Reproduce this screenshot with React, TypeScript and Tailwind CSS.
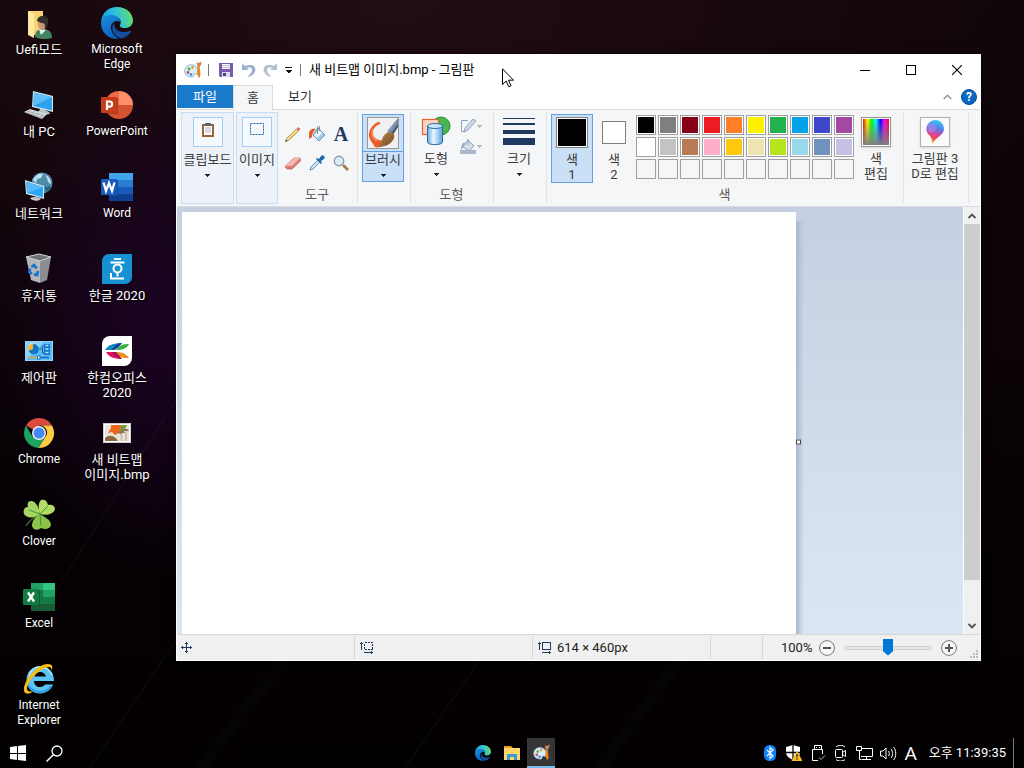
import React, { useState } from 'react'

const fontStack = "font-[Roboto,'Noto_Sans_CJK_KR',sans-serif]";

/* ---------- desktop icons ---------- */

function EdgeIcon({ className, id }: { className: string, id: string }) {
    return (
        <svg viewBox="0 0 32 32" className={className}>
            <defs>
                <linearGradient id={id + 'a'} x1="0" y1="0.5" x2="1" y2="0.3">
                    <stop offset="0" stopColor="#1b9de2" />
                    <stop offset="0.5" stopColor="#2cc3dc" />
                    <stop offset="1" stopColor="#6be05a" />
                </linearGradient>
                <linearGradient id={id + 'b'} x1="0" y1="0" x2="0.4" y2="1">
                    <stop offset="0" stopColor="#1a8fdc" />
                    <stop offset="1" stopColor="#0a63c0" />
                </linearGradient>
            </defs>
            <path d="M0 15C1 5 8 0 16 0c10 0 16 7 16 13.5 0 5-4 7.500-8 7.500-4 0-6-1.500-5-3 2-3 0-8-6-9C7 8 2 11 0 15z" fill={`url(#${id}a)`} />
            <path d="M0 16C1 10 6 7.500 11 8c5 .5 8 4 8.500 7C14 12 9 17 10 22c1 4 4 8 8 9.700C8 33 0 26 0 16z" fill={`url(#${id}b)`} />
            <path d="M13 16c-4 5-1 13 7 15.500C24 31 28 28 30 24.500c.4-1-.5-1-1-.7-7 3-15 .5-15.500-5.500z" fill="#14509e" />
        </svg>
    );
}

function PaintIcon({ className }: { className: string }) {
    return (
        <svg viewBox="0 0 18 18" className={className}>
            <path d="M9 4C4 3 1 6 .7 10c0 3 2 5.500 6 6 2 .2 3-.5 3-1.500 0-1.500.5-2 2-1.500 2 .5 3-1 2.500-3.500C14 7 12 4.500 9 4z" fill="#d8eef9" stroke="#6ea9cd" strokeWidth="0.8" />
            <circle cx="4" cy="11.500" r="1.400" fill="#e0443a" />
            <circle cx="5" cy="8" r="1.400" fill="#4bb14b" />
            <circle cx="8.500" cy="6.500" r="1.400" fill="#f0a02c" />
            <circle cx="7" cy="13.500" r="1.300" fill="#3b7fd4" />
            <path d="M12.500 1.500l2 .5L17.500.5 17 4l-1.500 2h-2z" fill="#c98a4b" />
            <path d="M13.500 6h2.200l.8 8-1 3-1-1-1.500-3z" fill="#e8841f" />
        </svg>
    );
}

function UserFolderIcon() {
    return (
        <svg viewBox="0 0 32 32" className="size-8">
            <path d="M5 4h15v24H5z" fill="#f7d374" />
            <path d="M5 4l6 3v24l-6-3z" fill="#ffe9a3" />
            <path d="M12 30c0-6 3-8 8-8s9 2 9 9c-5 1.500-13 1.500-17-1z" fill="#418260" />
            <path d="M16 22l2 6 5-5z" fill="#e9f1ec" />
            <ellipse cx="19" cy="17" rx="4" ry="6" fill="#c99873" />
            <path d="M14 15c0-5 3-6 6-6 5 0 6 4 5 7l-1 4-2 2c0-4 0-6-3-6s-4-3-5-1z" fill="#33302c" />
        </svg>
    );
}

function ComputerIcon() {
    return (
        <svg viewBox="0 0 32 32" className="size-8">
            <path d="M18 19l8 4 1 2-6 1-6-3z" fill="#b9c2ca" />
            <path d="M10 2l20 5v16L9 18z" fill="#dce6ee" />
            <path d="M11 3.500L29 8v13.500L10.200 17z" fill="#2da3ef" />
            <path d="M11 3.500L29 8 10.200 17z" fill="#5ebdfb" />
            <path d="M1 23l6-3 17 5-5 5z" fill="#d5d9dd" />
            <path d="M4 22l17 5M2.500 23.500L20 29M8 21l-4 3M12 22l-4 3.500M16 24l-4 3M20 25l-3 3.500" stroke="#9299a0" strokeWidth="0.6" />
        </svg>
    );
}

function NetworkIcon() {
    return (
        <svg viewBox="0 0 32 32" className="size-8">
            <circle cx="19" cy="12" r="10.500" fill="#4d8cab" />
            <path d="M10 9c3-6 7-7 10-6l-2 4-4 1-1 4zM22 4c4 1 6 5 6 9l-3-2-1-4z" fill="#bfe0ed" />
            <path d="M22 16l6-1c0 3-2 5-5 6z" fill="#2c657f" />
            <path d="M2 9l19 6v13L3 23z" fill="#dce6ee" />
            <path d="M3.200 10.500L20 16v10.500L4 22z" fill="#2ba6f4" />
            <path d="M3.200 10.500L20 16 4 22z" fill="#55b9fa" />
            <path d="M7 27c4-2 9-1 11 1-3 3-9 2-11-1z" fill="#c3cad0" />
        </svg>
    );
}

function TrashIcon() {
    return (
        <svg viewBox="0 0 32 32" className="size-8">
            <path d="M3 4l14 4v22l-9-3z" fill="#b4b6ba" />
            <path d="M17 8l11-4-4 23-7 3z" fill="#8b8d92" />
            <path d="M3 4l13-3 12 3-11 4z" fill="#6d7074" stroke="#d6d8db" strokeWidth="1" />
            <path d="M8.500 14l2.500-2 2.500 3.500M7 15.500L6.500 19l2.500 2M11 21.500l3 .5 1-4" fill="none" stroke="#1674cc" strokeWidth="2.800" />
        </svg>
    );
}

function ControlPanelIcon() {
    return (
        <svg viewBox="0 0 32 32" className="size-8">
            <rect x="2.500" y="6.500" width="27" height="19" fill="#5cbcf5" stroke="#8ed3fb" />
            <path d="M3 25V7h18z" fill="#8bd3fb" />
            <circle cx="11" cy="14.500" r="4.800" fill="#1477c8" />
            <path d="M10 13.500V8A5.500 5.500 0 0 0 5 13.500z" fill="#fff" />
            <path d="M10.500 14V9a5 5 0 0 1 0 10 5 5 0 0 1-5-5z" fill="#1477c8" />
            <path d="M10 14V8.500A5.500 5.500 0 0 0 5 16z" fill="#f7b62d" />
            <path d="M16.500 14h3v-3h2M19.500 14v4h2" stroke="#155e9f" fill="none" />
            <path d="M21 9h6v11h-6z" fill="#1577c6" />
            <path d="M22.500 10.500h3M22.500 14h3M22.500 17.500h3" stroke="#b9e4fd" strokeWidth="1.500" />
            <path d="M6 22.500h9" stroke="#f09b22" strokeWidth="1.400" />
            <path d="M17 22.500h9" stroke="#1568b5" strokeWidth="1.400" />
            <rect x="14.500" y="21" width="2.500" height="3" fill="#fff" stroke="#1577c6" />
        </svg>
    );
}

function ChromeIcon() {
    return (
        <svg viewBox="0 0 32 32" className="size-8">
            <path d="M16 16L3 8.500A15 15 0 0 1 29 8.500H16z" fill="#dd4b3e" />
            <path d="M3 8.500A15 15 0 0 0 15.500 31L22.500 19.500 16 16 9.500 19.700z" fill="#1da260" />
            <path d="M29 8.500A15 15 0 0 1 15.500 31L22.500 19.700A7 7 0 0 0 16 8.500z" fill="#ffcd41" />
            <circle cx="16" cy="16" r="7" fill="#f1f1f1" />
            <circle cx="16" cy="16" r="5.500" fill="#4587f3" />
        </svg>
    );
}

function CloverIcon() {
    return (
        <svg viewBox="0 0 32 32" className="size-8">
            <path d="M17 15C13 17 6 22 3 27" stroke="#3e8537" strokeWidth="1.200" fill="none" />
            <path d="M17 15C16 9 13 2 8 2 5 2 4 5 5 8c-4 0-5 4-4 7 3 5 11 4 16 0z" fill="#a6d65f" />
            <path d="M17 15c-2-5-2-11 1-14 3-1 6 0 7 5 4-1 7 1 7 4-1 5-9 7-15 5z" fill="#b0dc63" />
            <path d="M17 15c-5 3-8 7-8 12 1 4 5 5 9 2 4 2 9 1 10-3 0-5-6-8-11-11z" fill="#8ac548" />
            <path d="M17 15L6 11M17 15l8-8M17 15l1 12M17 15l7 5" stroke="#3a8a3e" strokeWidth="0.9" />
        </svg>
    );
}

function ExcelIcon() {
    return (
        <svg viewBox="0 0 32 32" className="size-8">
            <path d="M8 2h12v7H8z" fill="#21a366" /><path d="M20 2h12v7H20z" fill="#33c481" />
            <path d="M8 9h12v14H8z" fill="#107c41" /><path d="M20 9h12v7H20z" fill="#21a366" />
            <path d="M20 16h12v7H20z" fill="#107c41" /><path d="M8 23h24v7H8z" fill="#185c37" />
            <path d="M8 9h9v16H8z" fill="#0b5a2e" />
            <rect y="8" width="16" height="16" rx="1" fill="#107c41" />
            <path d="M5 11.500l6 9M11 11.500l-6 9" stroke="#fff" strokeWidth="2.400" />
        </svg>
    );
}

function IeIcon() {
    return (
        <svg viewBox="0 0 32 32" className="size-8">
            <path d="M31 18H11c0 4 3 6 6 6 2.500 0 4-1 5-2.500h8C28 27 23 30.500 17 30.500 9 30.500 3.500 24.500 3.500 17S9 3 17 3s14 6 14 15zM11.500 13.500H23C22.500 11 20 9 17 9s-5 2-5.500 4.500z" fill="#5cc4f5" />
            <path d="M6 13c2-6 6-9 11-9s10 3 12 8" fill="none" stroke="#b6e8fd" strokeWidth="1.500" />
            <path d="M5 22c3 5 7 7 12 7 5 0 9-2 11-6" fill="none" stroke="#2c9fe2" strokeWidth="2" />
            <path d="M28 8c1.500-5-2.500-5-8-2C11 11 5 19 4 25c0 4 3 4 6 3-2 3-8 4-9 0C0 21 7 10 16 4c7-5 17-4 12 4z" fill="#f7bd17" />
        </svg>
    );
}

function PowerPointIcon() {
    return (
        <svg viewBox="0 0 32 32" className="size-8">
            <path d="M18 2A14 14 0 0 0 4 16h14z" fill="#ed6c47" />
            <path d="M18 2a14 14 0 0 1 14 14H18z" fill="#ff8f6b" />
            <path d="M4 16a14 14 0 0 0 28 0z" fill="#d35230" />
            <path d="M5 9h12v16H8z" fill="#a83c20" />
            <rect y="8" width="16" height="16" rx="1" fill="#c43e1c" />
            <path d="M6 21v-8.500h2.500a2.500 2.500 0 0 1 0 5.200H6" stroke="#fff" strokeWidth="2.200" fill="none" />
        </svg>
    );
}

function WordIcon() {
    return (
        <svg viewBox="0 0 32 32" className="size-8">
            <path d="M8 2h24v7H8z" fill="#41a5ee" />
            <path d="M8 9h24v7H8z" fill="#2b7cd3" />
            <path d="M8 16h24v7H8z" fill="#185abd" />
            <path d="M8 23h24v7H8z" fill="#103f91" />
            <path d="M8 9h9v16H8z" fill="#124a9e" />
            <rect y="8" width="16" height="16" rx="1" fill="#185abd" />
            <path d="M2.500 11.500L5 20l3-8 3 8 2.500-8.500" stroke="#fff" strokeWidth="2.200" fill="none" />
        </svg>
    );
}

function HangulIcon() {
    return (
        <svg viewBox="0 0 32 32" className="size-8">
            <path d="M8 1h23v23a7 7 0 0 1-7 7H1V8a7 7 0 0 1 7-7z" fill="#1692d3" />
            <g fill="none" stroke="#fff" strokeWidth="2">
                <path d="M13 6h7M9.500 9.500h14M16.500 20v3.500M10 20v5.500h13" />
                <circle cx="16.500" cy="15.500" r="4" />
            </g>
        </svg>
    );
}

function HanOfficeIcon() {
    return (
        <svg viewBox="0 0 32 32" className="size-8">
            <path d="M9 1h22v22a8 8 0 0 1-8 8H1V9a8 8 0 0 1 8-8z" fill="#fff" />
            <path d="M4 15c3-5 8-7 17-7l-7 7z" fill="#148ac9" />
            <path d="M10 15c5 0 8-3 11-7-7 0-7 4-11 7z" fill="#1a3c9a" />
            <path d="M15 15c3-5 7-6 13-6-2 4-6 6-13 6z" fill="#39b24a" />
            <path d="M5 17h10l6 7c-8 0-13-2-16-7z" fill="#e0105d" />
            <path d="M15 17c6 0 10 2 13 6-6 0-9 0-13-6z" fill="#f08a1d" />
            <path d="M11 17h4l6 7c-4 0-6-3-10-7z" fill="#a01556" />
        </svg>
    );
}

function BitmapIcon() {
    return (
        <svg viewBox="0 0 32 32" className="size-8">
            <rect x="2.500" y="6.500" width="27" height="19" fill="#fff" stroke="#cfcfcf" />
            <rect x="4" y="8" width="24" height="16" fill="#e8e2da" />
            <path d="M10 8h11l-3 8-4 2-3-3-4 1 3-5z" fill="#f0641e" />
            <path d="M21 8h5l-3 6-4 4-1-3z" fill="#6f9a3c" />
            <path d="M4 21c5-4 10-2 13 3H4z" fill="#8f6540" />
            <path d="M17 16c1-3 6-3 7 0zM22 14c1-3 5-3 6 0z" fill="#8d7058" />
            <path d="M20.500 16v8M25 14v10" stroke="#cbb7a2" strokeWidth="1.500" />
        </svg>
    );
}

// latin-only captions are set a size smaller than the Korean ones
const desktopItems: { label: string[], icon: React.ReactNode, latin?: boolean }[] = [
    { label: ['Uefi모드'], icon: <UserFolderIcon /> },
    { label: ['내 PC'], icon: <ComputerIcon /> },
    { label: ['네트워크'], icon: <NetworkIcon /> },
    { label: ['휴지통'], icon: <TrashIcon /> },
    { label: ['제어판'], icon: <ControlPanelIcon /> },
    { label: ['Chrome'], icon: <ChromeIcon />, latin: true },
    { label: ['Clover'], icon: <CloverIcon />, latin: true },
    { label: ['Excel'], icon: <ExcelIcon />, latin: true },
    { label: ['Internet', 'Explorer'], icon: <IeIcon />, latin: true },
    { label: ['Microsoft', 'Edge'], icon: <EdgeIcon className="size-8" id="edgeDesk" />, latin: true },
    { label: ['PowerPoint'], icon: <PowerPointIcon />, latin: true },
    { label: ['Word'], icon: <WordIcon />, latin: true },
    { label: ['한글 2020'], icon: <HangulIcon /> },
    { label: ['한컴오피스', '2020'], icon: <HanOfficeIcon /> },
    { label: ['새 비트맵', '이미지.bmp'], icon: <BitmapIcon /> },
];

function Desktop() {
    return (
        <main className="grid grid-flow-col grid-rows-[repeat(9,82px)] auto-cols-[78px] justify-start">
            {desktopItems.map((item) => (
                <button key={item.label[0]} className={'flex flex-col items-center justify-start pt-[7px] gap-[3px] text-white leading-[15px] whitespace-nowrap [text-shadow:1px_1px_2px_#000] ' + (item.latin ? 'text-[12px]' : 'text-[13px]')}>
                    {item.icon}
                    <span className="leading-[15px]">
                        {item.label.map((line) => <span key={line} className="block h-[15px]">{line}</span>)}
                    </span>
                </button>
            ))}
        </main>
    );
}

/* ---------- paint window ---------- */

function DownArrow({ className = 'text-[#222]' }: { className?: string }) {
    return (
        <svg viewBox="0 0 5 3" className={'w-[5px] h-[3px] shrink-0 ' + className} shapeRendering="crispEdges">
            <path d="M0 0h5v1H4v1H3v1H2V2H1V1H0z" fill="currentColor" />
        </svg>
    );
}

function TitleBar() {
    return (
        <div className="flex h-[30px] items-center pl-[7px] shrink-0">
            <PaintIcon className="size-[18px]" />
            <span className="w-px h-3 bg-[#777] ml-[6px]" />
            <button aria-label="저장" className="ml-[10px]">
                <svg viewBox="0 0 14 14" className="size-[14px]">
                    <path d="M0 0h14v14H1l-1-1z" fill="#7a5bb0" />
                    <path d="M3 1h8v5H3z" fill="#f2f0f8" />
                    <path d="M3 2.500h8M3 4.500h8" stroke="#b8b0cf" strokeWidth="0.6" />
                    <path d="M3 9h8v5H3z" fill="#d9dce8" />
                    <path d="M4 10h3v3H4z" fill="#54407f" />
                </svg>
            </button>
            <button aria-label="실행 취소" className="ml-[9px]">
                <svg viewBox="0 0 14 14" className="size-[14px]">
                    <path d="M0 0v7h7L5 5c5-2 7 3 2 7l-1 2c9-2 10-12 2-12-2 0-4 0-5 1z" fill="#9db0cf" />
                </svg>
            </button>
            <button aria-label="다시 실행" className="ml-[7px]">
                <svg viewBox="0 0 14 14" className="size-[14px]">
                    <path d="M14 0v7H7l2-2C4 3 2 8 7 12l1 2C-1 12-2 2 6 2c2 0 4 0 5 1z" fill="#b4c1d3" />
                </svg>
            </button>
            <button aria-label="빠른 실행 도구 모음 사용자 지정" className="ml-2">
                <svg viewBox="0 0 7 6" className="w-[7px] h-[6px]" shapeRendering="crispEdges">
                    <path d="M0 0h7v1H0zM0 3h7L4 6H3z" fill="#111" />
                </svg>
            </button>
            <span className="w-px h-3 bg-[#777] ml-2" />
            <h1 className="ml-2 text-[13px] leading-4 text-black whitespace-nowrap">새 비트맵 이미지.bmp - 그림판</h1>

            <div className="ml-auto flex h-full">
                <button aria-label="최소화" className="w-[46px] flex items-center justify-center">
                    <span className="w-[10px] h-px bg-black" />
                </button>
                <button aria-label="최대화" className="w-[46px] flex items-center justify-center">
                    <span className="size-[10px] border border-black" />
                </button>
                <button aria-label="닫기" className="w-[46px] flex items-center justify-center">
                    <svg viewBox="0 0 10 10" className="size-[10px]">
                        <path d="M0 0l10 10M10 0L0 10" stroke="#000" strokeWidth="1.100" />
                    </svg>
                </button>
            </div>
        </div>
    );
}

function TabRow() {
    return (
        <div className="flex h-[25px] items-end shrink-0 text-[13px] leading-4 border-b border-[#dadbdc]">
            <button className="w-14 h-[23px] mb-px bg-[#1979ca] text-white">파일</button>
            <button className="w-10 h-[25px] -mb-px bg-[#f5f6f7] border border-b-0 border-[#dadbdc] text-[#333]">홈</button>
            <button className="w-[54px] h-6 text-[#333]">보기</button>
            <div className="ml-auto flex items-center gap-[9px] h-6 pr-[3px]">
                <button aria-label="리본 최소화">
                    <svg viewBox="0 0 9 6" className="w-[9px] h-[6px]">
                        <path d="M.7 5L4.500 1.200 8.300 5" fill="none" stroke="#999" strokeWidth="1.500" />
                    </svg>
                </button>
                <button aria-label="도움말" className="size-4 rounded-full bg-[#0a67c2] border border-[#064f99] text-white text-[12px] leading-[14px] font-bold">?</button>
            </div>
        </div>
    );
}

const paletteColors: string[] = [
    'bg-[#000000]', 'bg-[#7f7f7f]', 'bg-[#880015]', 'bg-[#ed1c24]', 'bg-[#ff7f27]', 'bg-[#fff200]', 'bg-[#22b14c]', 'bg-[#00a2e8]', 'bg-[#3f48cc]', 'bg-[#a349a4]',
    'bg-[#ffffff]', 'bg-[#c3c3c3]', 'bg-[#b97a57]', 'bg-[#ffaec9]', 'bg-[#ffc90e]', 'bg-[#efe4b0]', 'bg-[#b5e61d]', 'bg-[#99d9ea]', 'bg-[#7092be]', 'bg-[#c8bfe7]',
];

function Group({ className, label, children }: { className: string, label?: string, children: React.ReactNode }) {
    return (
        <section className={'flex flex-col shrink-0 border-r border-[#e2e3e4] h-[91px] ' + className}>
            <div className="flex flex-1 items-start">{children}</div>
            {label && <h2 className="text-center text-[#5a5a5a] leading-4 pr-px">{label}</h2>}
        </section>
    );
}

const collapsed = 'shrink-0 h-[92px] border border-[#c5def5] bg-[#ecf2f7] flex flex-col items-center pt-1 whitespace-nowrap';
const iconFrame = 'size-[30px] border border-[#a3cdf7] bg-[#f5f9fd] flex justify-center pt-1 mb-[5px]';

function ToolIcons() {
    return (
        <div className="grid grid-cols-3 gap-x-2 gap-y-[13px] pt-[14px] pl-[7px]">
            <button aria-label="연필">
                <svg viewBox="0 0 16 16" className="size-4">
                    <path d="M.5 15.500L2 12 11.500 3l2 2L4 14z" fill="#f4cf72" stroke="#9a7227" strokeWidth="0.7" />
                    <path d="M.5 15.500L2 12l2 2z" fill="#edd4b8" /><path d="M.3 15.700l1-2.200 1.200 1.200z" fill="#222" />
                    <path d="M11.500 3l1.500-2L15.500 3l-2 2z" fill="#d76b68" />
                    <path d="M3 12.500l9-8.500" stroke="#fff0b8" strokeWidth="0.8" />
                </svg>
            </button>
            <button aria-label="색 채우기">
                <svg viewBox="0 0 16 16" className="size-4">
                    <path d="M9 2l7 7-6 6-6-6z" fill="#a8cbe8" stroke="#4f7fa9" strokeWidth="0.8" />
                    <path d="M5 9l5-5 3 3-5 5z" fill="#f3faff" />
                    <path d="M8.500 8V1c0-1 2-1 2 0v4" fill="none" stroke="#708aa3" />
                    <path d="M7 3C3 2 0 4 0 8v5l3-2c0-3 1-5 4-8z" fill="#e65a24" />
                </svg>
            </button>
            <button aria-label="텍스트" className="size-4 font-['Liberation_Serif',serif] font-bold text-[20px] leading-4 text-[#1f3a63] text-center">A</button>
            <button aria-label="지우개">
                <svg viewBox="0 0 16 16" className="size-4">
                    <path d="M.5 11L9 3h6l.5 3-8.500 8H2l-1.500-1.500z" fill="#e07c78" stroke="#b85755" strokeWidth="0.7" />
                    <path d="M.8 11L9 3h6l-8 8z" fill="#f5b8b2" />
                </svg>
            </button>
            <button aria-label="색 선택">
                <svg viewBox="0 0 16 16" className="size-4">
                    <path d="M1 15l1-3 7-7 2 2-7 7z" fill="#d8eaf6" stroke="#56809f" strokeWidth="0.9" />
                    <path d="M7 4l1-1 2 1 2-3c2-2 5 1 3 3l-3 2 1 2-1 1z" fill="#2069ae" />
                </svg>
            </button>
            <button aria-label="돋보기">
                <svg viewBox="0 0 16 16" className="size-4">
                    <path d="M10 10l5 5" stroke="#a97b42" strokeWidth="2.600" />
                    <circle cx="6" cy="6" r="4.700" fill="#d8ecf8" stroke="#8d979f" strokeWidth="1.400" />
                </svg>
            </button>
        </div>
    );
}

function BrushIcon() {
    return (
        <svg viewBox="0 0 32 32" className="size-8">
            <defs>
                <linearGradient id="bristle" x1="0" y1="0" x2="1" y2="1">
                    <stop offset="0" stopColor="#c9965c" />
                    <stop offset="1" stopColor="#6e421d" />
                </linearGradient>
                <linearGradient id="ferrule" x1="0" y1="0" x2="0.6" y2="0.6">
                    <stop offset="0" stopColor="#f2f6fa" />
                    <stop offset="1" stopColor="#6f87a3" />
                </linearGradient>
            </defs>
            <rect x="0.500" y="0.500" width="31" height="31" fill="#eef0f2" stroke="#999" />
            <path d="M31 1v8l-6 9-5-4z" fill="url(#ferrule)" />
            <path d="M31 7v3l-5 8-2-1z" fill="#3f5570" />
            <path d="M9 6c3-2 5-1 4 1-4 1-8 6-8 10 1 3 4 5 7 6l4 1-1 4c-2 2-5 3-7 2-2-4-7-8-6-14 1-5 4-8 7-10z" fill="#ee5a28" />
            <path d="M6 12c-2 5 0 9 4 12" stroke="#f89468" strokeWidth="1.500" fill="none" />
            <path d="M11 30c2-2 3-4 4-8 2-5 6-8 9-7 4 2 4 5 2 8-3 5-9 7-15 7z" fill="url(#bristle)" />
            <path d="M16 26c1-4 4-7 7-9M18 27c2-4 5-5 7-8" stroke="#7d4f26" strokeWidth="0.7" fill="none" />
        </svg>
    );
}

function Ribbon() {
    const [color, setColor] = useState<number>(1);

    const picked = 'border-[#62a2e4] bg-[#c9e0f7]';

    return (
        <div className="flex shrink-0 bg-[#f5f6f7] border-b border-[#dadbdc] h-[97px] pt-0.5 pl-1 text-[13px] leading-[15px] text-[#3c3c3c] overflow-hidden">
            <button className={collapsed + ' w-[53px] mr-0.5'}>
                <span className={iconFrame}>
                    <svg viewBox="0 0 14 16" className="w-[14px] h-4">
                        <path d="M1 2h12v13H1z" fill="#96663b" />
                        <path d="M3 4h8v9H3z" fill="#fff" />
                        <path d="M4 1h6v3H4z" fill="#5e6770" />
                        <path d="M4 6h6M4 8h6M4 10h6" stroke="#9aa4ad" strokeWidth="0.8" />
                    </svg>
                </span>
                클립보드
                <DownArrow className="mt-[7px] text-[#222]" />
            </button>
            <button className={collapsed + ' w-[42px]'}>
                <span className={iconFrame}>
                    <svg viewBox="0 0 16 14" className="w-4 h-[14px]">
                        <rect x="1.500" y="1.500" width="13" height="11" fill="none" stroke="#1f63a5" strokeDasharray="2 1" />
                    </svg>
                </span>
                이미지
                <DownArrow className="mt-[7px] text-[#222]" />
            </button>

            <Group className="w-20" label="도구">
                <ToolIcons />
            </Group>

            <Group className="w-[53px]">
                <button className={'mt-0.5 ml-1 w-[42px] h-[68px] border flex flex-col items-center ' + picked}>
                    <span className="w-full h-[37px] border-b border-[#62a2e4] flex justify-center pt-0.5">
                        <BrushIcon />
                    </span>
                    <span className="leading-4">브러시</span>
                    <DownArrow className="mt-[6px] text-[#222]" />
                </button>
            </Group>

            <Group className="w-[83px]" label="도형">
                <button className="ml-[9px] mt-1 w-8 flex flex-col items-center">
                    <svg viewBox="0 0 30 30" className="size-[30px] mb-[5px]">
                        <defs>
                            <linearGradient id="cyl" x1="0" x2="1">
                                <stop offset="0" stopColor="#66aee8" />
                                <stop offset="0.4" stopColor="#eaf7ff" />
                                <stop offset="1" stopColor="#5aa3e0" />
                            </linearGradient>
                        </defs>
                        <circle cx="20" cy="10" r="9" fill="#49b54d" stroke="#258b2d" />
                        <rect x="1.500" y="3.500" width="16" height="15" fill="#fdd6c2" stroke="#e8602c" strokeWidth="1.200" />
                        <path d="M6.500 10v16c0 3.500 15 3.500 15 0V10z" fill="url(#cyl)" stroke="#2a6cab" />
                        <ellipse cx="14" cy="10" rx="7.500" ry="2.500" fill="#c9e7fa" stroke="#2a6cab" />
                    </svg>
                    <span>도형</span>
                    <DownArrow className="mt-[7px] text-[#222]" />
                </button>
                <div className="ml-2 mt-[6px] flex flex-col gap-1">
                    <button aria-label="윤곽선" className="flex items-center gap-px">
                        <svg viewBox="0 0 16 16" className="size-4">
                            <path d="M8 2.500H1.500v11H5" fill="none" stroke="#8da3bf" />
                            <path d="M4 14l1-4 8-9 3 2-8 9z" fill="#cdd8e5" stroke="#8698b0" strokeWidth="0.8" />
                        </svg>
                        <DownArrow className="text-[#b8b8b8]" />
                    </button>
                    <button aria-label="채우기" className="flex items-center gap-px">
                        <svg viewBox="0 0 16 16" className="size-4">
                            <path d="M0 12h16v4H0z" fill="#a9b8cf" />
                            <path d="M8 2l6 6-5 5-6-4z" fill="#d5dfea" stroke="#8fa1b9" />
                            <path d="M8 7V1" stroke="#8fa1b9" /><path d="M5 4c-3 1-4 3-4 8l3-3z" fill="#9db0c9" />
                        </svg>
                        <DownArrow className="text-[#b8b8b8]" />
                    </button>
                </div>
            </Group>

            <Group className="w-[53px]">
                <button className="ml-[9px] mt-1 flex flex-col items-center">
                    <span className="flex flex-col w-8 h-[30px] pt-0.5 mb-[5px]">
                        <span className="h-px bg-[#1e3a5f]" />
                        <span className="h-0.5 mt-1 bg-[#1e3a5f]" />
                        <span className="h-1 mt-[5px] bg-[#1e3a5f]" />
                        <span className="h-[7px] mt-1 bg-[#1e3a5f]" />
                    </span>
                    <span>크기</span>
                    <DownArrow className="mt-[7px] text-[#222]" />
                </button>
            </Group>

            <Group className="w-[357px]" label="색">
                <button onClick={() => setColor(1)} className={'mt-0.5 ml-1 w-[42px] h-[69px] border flex flex-col items-center pt-0.5 ' + (color == 1 ? picked : 'border-transparent')}>
                    <span className="size-8 border border-[#7f7f7f] bg-white p-px mb-1">
                        <span className="block size-full bg-black" />
                    </span>
                    <span>색</span>
                    <span>1</span>
                </button>
                <button onClick={() => setColor(2)} className={'mt-0.5 w-[42px] h-[69px] border flex flex-col items-center pt-[6px] ' + (color == 2 ? picked : 'border-transparent')}>
                    <span className="size-6 border border-[#7f7f7f] bg-white mb-2" />
                    <span>색</span>
                    <span>2</span>
                </button>
                <div className="grid grid-cols-[repeat(10,20px)] gap-0.5 mt-[3px] ml-px">
                    {paletteColors.map((bg) => (
                        <button key={bg} aria-label={bg.slice(4, -1)} className="size-5 border border-[#a0a0a0] bg-white p-px">
                            <span className={'block size-full ' + bg} />
                        </button>
                    ))}
                    {Array.from({ length: 10 }, (_, i) => (
                        <button key={i} aria-label="사용자 지정 색" className="size-5 border border-[#a0a0a0]" />
                    ))}
                </div>
                <button className="mt-[5px] ml-1 w-[36px] flex flex-col items-center whitespace-nowrap">
                    <span className="size-[30px] border border-[#999] bg-white p-px mb-1 shadow-sm">
                        <span className="block size-full bg-[linear-gradient(to_top,#808080,transparent),linear-gradient(to_right,#f00,#ff0,#0f0,#0ff,#00f,#f0f,#f00)]" />
                    </span>
                    <span>색</span>
                    <span>편집</span>
                </button>
            </Group>

            <Group className="w-[65px]">
                <button className="mt-[5px] w-full pr-0.5 flex flex-col items-center whitespace-nowrap">
                    <span className="size-[30px] border border-[#b0b0b0] bg-[#fafafa] mb-1 flex justify-center shadow-sm">
                        <svg viewBox="0 0 20 28" className="w-5 h-7">
                            <defs>
                                <linearGradient id="drop" x1="0.6" y1="0" x2="0.4" y2="1">
                                    <stop offset="0" stopColor="#33cbee" />
                                    <stop offset="0.35" stopColor="#5b7be8" />
                                    <stop offset="0.6" stopColor="#d84595" />
                                    <stop offset="0.8" stopColor="#ee5348" />
                                    <stop offset="1" stopColor="#ffc823" />
                                </linearGradient>
                            </defs>
                            <path d="M10.500 2c5 0 8.500 4 8.500 9 0 6-8 8-12 15 0-4 0-6-3-9-2-2-2.500-4-2.500-6 0-5 4-9 9-9z" fill="url(#drop)" />
                            <path d="M3 7c4-3 8-1 8 3 0 3-3 5-6 5-2-2-3-5-2-8z" fill="#b886ee" opacity="0.6" />
                        </svg>
                    </span>
                    <span>그림판 3</span>
                    <span>D로 편집</span>
                </button>
            </Group>
        </div>
    );
}

function Canvas() {
    return (
        <div className="flex flex-1 min-h-0">
            <div className="relative flex-1 overflow-hidden pt-[5px] pl-[5px] bg-linear-to-b from-[#c6cfe1] to-[#dce6f3]">
                <div className="relative w-[614px] h-[460px] bg-white">
                    <div className="absolute left-full top-[9px] bottom-0 w-2 bg-linear-to-r from-[#a9b7cf] to-[#a9b7cf]/0" />
                    <div className="absolute left-full top-1/2 -translate-y-1/2 size-[5px] border border-[#444] bg-white" />
                </div>
            </div>
            <div className="w-[17px] shrink-0 flex flex-col bg-[#f0f0f0] border-l border-white">
                <button aria-label="위로" className="h-[17px] flex items-center justify-center">
                    <svg viewBox="0 0 8 6" className="w-2 h-[6px]"><path d="M.5 5L4 1.500 7.500 5" fill="none" stroke="#505050" strokeWidth="1.900" /></svg>
                </button>
                <div className="flex-1 flex flex-col">
                    <div className="h-[90.5%] bg-[#cdcdcd]" />
                </div>
                <button aria-label="아래로" className="h-[17px] flex items-center justify-center">
                    <svg viewBox="0 0 8 6" className="w-2 h-[6px]"><path d="M.5 1L4 4.500 7.500 1" fill="none" stroke="#505050" strokeWidth="1.900" /></svg>
                </button>
            </div>
        </div>
    );
}

function ZoomButton({ label, plus }: { label: string, plus?: boolean }) {
    return (
        <button aria-label={label}>
            <svg viewBox="0 0 16 16" className="size-4">
                <circle cx="8" cy="8" r="7.400" fill="#f6f6f6" stroke="#777" />
                <path d={plus ? 'M4 8h8M8 4v8' : 'M4 8h8'} stroke="#555" strokeWidth="2" />
            </svg>
        </button>
    );
}

function StatusBar() {
    const [zoom, setZoom] = useState<number>(50);

    const cell = 'flex items-center border-r border-[#d7d7d7] h-[23px]';

    return (
        <footer className="flex shrink-0 h-[26px] items-center bg-[#f0f0f0] border-t border-[#d7d7d7] text-[13px] leading-4 text-[#222]">
            <div className={cell + ' w-[178px] pl-1'}>
                <svg viewBox="0 0 11 11" className="size-[11px]" shapeRendering="crispEdges">
                    <path d="M5 0h1v11H5zM0 5h11v1H0zM4 1h3v1H4zM4 9h3v1H4zM1 4h1v3H1zM9 4h1v3H9z" fill="#1e3a5f" />
                </svg>
            </div>
            <div className={cell + ' w-[178px] pl-[5px]'}>
                <svg viewBox="0 0 14 12" className="w-[14px] h-3" shapeRendering="crispEdges">
                    <path d="M1 0h1v8H1zM0 1h3v1H0zM4 10h9v1H4zM11 9h1v3h-1z" fill="#1e3a5f" />
                    <rect x="4.500" y="0.500" width="8" height="7" fill="none" stroke="#1e3a5f" strokeDasharray="2 1" />
                </svg>
            </div>
            <div className={cell + ' w-[178px] pl-[5px] gap-[5px]'}>
                <svg viewBox="0 0 14 12" className="w-[14px] h-3" shapeRendering="crispEdges">
                    <path d="M1 0h1v8H1zM0 1h3v1H0zM4 10h9v1H4zM11 9h1v3h-1z" fill="#1e3a5f" />
                    <rect x="4.500" y="0.500" width="8" height="7" fill="#eaf3fa" stroke="#1e3a5f" />
                </svg>
                <span>614 × 460px</span>
            </div>
            <div className={cell + ' flex-1'} />
            <div className="flex items-center h-full pl-[18px]">
                <span className="w-[38px]">100%</span>
                <ZoomButton label="축소" />
                <input
                    type="range"
                    aria-label="확대/축소"
                    value={zoom}
                    onChange={(e) => setZoom(Number(e.target.value))}
                    className="appearance-none bg-transparent w-[86px] h-[18px] mx-[10px] [&::-webkit-slider-runnable-track]:h-1 [&::-webkit-slider-runnable-track]:border [&::-webkit-slider-runnable-track]:border-[#d0d0d0] [&::-webkit-slider-runnable-track]:bg-[#e7eaea] [&::-webkit-slider-thumb]:appearance-none [&::-webkit-slider-thumb]:w-[10px] [&::-webkit-slider-thumb]:h-[17px] [&::-webkit-slider-thumb]:-mt-[8px] [&::-webkit-slider-thumb]:bg-[#0078d7] [&::-webkit-slider-thumb]:[clip-path:polygon(0_0,100%_0,100%_75%,50%_100%,0_75%)]"
                />
                <ZoomButton label="확대" plus />
                <svg viewBox="0 0 8 8" className="size-2 ml-[13px] mr-0.5 self-end mb-0.5" shapeRendering="crispEdges">
                    <path d="M6 0h2v2H6zM3 3h2v2H3zM6 3h2v2H6zM0 6h2v2H0zM3 6h2v2H3zM6 6h2v2H6z" fill="#bbb" />
                </svg>
            </div>
        </footer>
    );
}

/* ---------- taskbar ---------- */

function Taskbar() {
    return (
        <nav className="absolute inset-x-0 bottom-0 h-[30px] flex items-center text-white">
            <div className="flex-1 flex items-center gap-5">
                <button aria-label="시작" className="ml-[10px]">
                    <svg viewBox="0 0 16 16" className="size-4"><path d="M0 2l7-1v7H0zM8 1l8-1v8H8zM0 9h7v6l-7-1zM8 9h8v7l-8-1z" fill="#fff" /></svg>
                </button>
                <button aria-label="검색">
                    <svg viewBox="0 0 17 17" className="size-[17px]">
                        <circle cx="11" cy="6" r="5" fill="none" stroke="#fff" strokeWidth="1.300" />
                        <path d="M7.500 9.500L.5 16.500" stroke="#fff" strokeWidth="1.500" />
                    </svg>
                </button>
            </div>
            <div className="flex gap-px h-full">
                <button aria-label="Edge" className="w-7 flex items-center justify-center"><EdgeIcon className="size-4" id="edgeBar" /></button>
                <button aria-label="파일 탐색기" className="w-7 flex items-center justify-center">
                    <svg viewBox="0 0 16 14" className="w-4 h-[14px]">
                        <path d="M0 0h7l2 2H0z" fill="#e8a317" /><path d="M0 2h16v12H0z" fill="#ffd667" />
                        <path d="M3 14V8h10v6h-3v-3H6v3z" fill="#3b96d9" />
                    </svg>
                </button>
                <button aria-label="그림판" className="w-7 flex items-center justify-center bg-[#373436] border-b-2 border-[#76b9ed]"><PaintIcon className="size-[17px]" /></button>
            </div>
            <div className="flex-1 flex items-center justify-end h-full">
                <div className="flex items-center gap-2">
                    <svg viewBox="0 0 12 16" className="w-3 h-4">
                        <rect width="12" height="16" rx="5.500" fill="#0a84ff" />
                        <path d="M3 5l6 6-3 2.500v-11L9 5l-6 6" fill="none" stroke="#fff" strokeWidth="1.100" />
                    </svg>
                    <svg viewBox="0 0 16 16" className="size-4 ml-0.5">
                        <path d="M7 0l7 2v5c0 4-3 6-7 8-4-2-7-4-7-8V2z" fill="#fff" />
                        <path d="M7 0v15M0 7.500h14" stroke="#0a0508" strokeWidth="1.300" />
                        <path d="M11 6l5.500 10h-11z" fill="#fbbc1c" /><path d="M11 9v3.500M11 13.500v1.200" stroke="#222" strokeWidth="1.300" />
                    </svg>
                    <svg viewBox="0 0 16 16" className="size-4" fill="none" stroke="#fff">
                        <path d="M4.500 4.500v-4h7v4M8 15.500H2.500v-11h10V9M6 2.500h1M9 2.500h1" /><path d="M9 12.500l2 2 4-4" stroke="#bbb" />
                    </svg>
                    <svg viewBox="0 0 14 16" className="w-[14px] h-4" fill="none" stroke="#fff">
                        <rect x="1.500" y="4.500" width="7" height="8" rx="1" /><path d="M8.500 7.500l3-2v6l-3-2M2 2c2-2 7-2 9 0M2 14.500c2 2 7 2 9 0" />
                    </svg>
                    <svg viewBox="0 0 17 16" className="w-[17px] h-4" fill="none" stroke="#fff">
                        <path d="M5 3.500h11.500v8H5M10.500 11.500v3M6 14.500h9M.5 1.500h5v4h-5zM3.500 6v8.500h2" />
                    </svg>
                    <svg viewBox="0 0 17 16" className="w-[17px] h-4 -ml-px" fill="none" stroke="#fff">
                        <path d="M.5 6v5h2.500l3 3V3L3 6zM8.500 6c1 1 1 4 0 5M11 4c2 2 2 7 0 9M13.500 2c3 3 3 10 0 13" />
                    </svg>
                    <span className="font-['Open_Sans',sans-serif] text-[19px] leading-6">A</span>
                </div>
                <time className="ml-3 text-[13px] leading-4 whitespace-nowrap">오후 11:39:35</time>
                <button aria-label="바탕 화면 보기" className="ml-[7px] w-[11px] h-full border-l border-[#77757a]" />
            </div>
        </nav>
    );
}

function App() {
    return (
        <div className={'relative h-screen overflow-hidden select-none bg-[#040004] ' + fontStack}>
            <div className="absolute inset-0 bg-[radial-gradient(ellipse_190px_260px_at_180px_320px,#1c0326_0%,transparent_100%),radial-gradient(ellipse_700px_420px_at_400px_0px,#220c14_0%,transparent_100%),linear-gradient(to_bottom,#0e0509_0%,#0b0308_45%,#040003_75%,#030002_100%)]" />
            <svg className="absolute inset-0 size-full" viewBox="0 0 1024 768" preserveAspectRatio="none" fill="none" stroke="#fff">
                <path d="M405 768L480 660M50 600L176 400M90 768L176 640" strokeOpacity="0.06" />
                <path d="M600 768L680 660M200 768L300 640" strokeOpacity="0.01" strokeWidth="12" />
            </svg>

            <div className="relative"><Desktop /></div>

            <div className="absolute left-44 top-[54px] right-[43px] bottom-[107px] bg-white border border-white flex flex-col shadow-[0_0_8px_rgba(0,0,0,0.6)]">
                <TitleBar />
                <TabRow />
                <Ribbon />
                <Canvas />
                <StatusBar />
            </div>

            <Taskbar />

            <svg viewBox="0 0 12 20" className="absolute left-[502px] top-[68px] w-3 h-5">
                <path d="M.5 .8v15.700l3.700-3.500 2.500 5.700 2.300-1-2.500-5.500h5z" fill="#fff" stroke="#000" />
            </svg>
        </div>
    )
}

export default App;
